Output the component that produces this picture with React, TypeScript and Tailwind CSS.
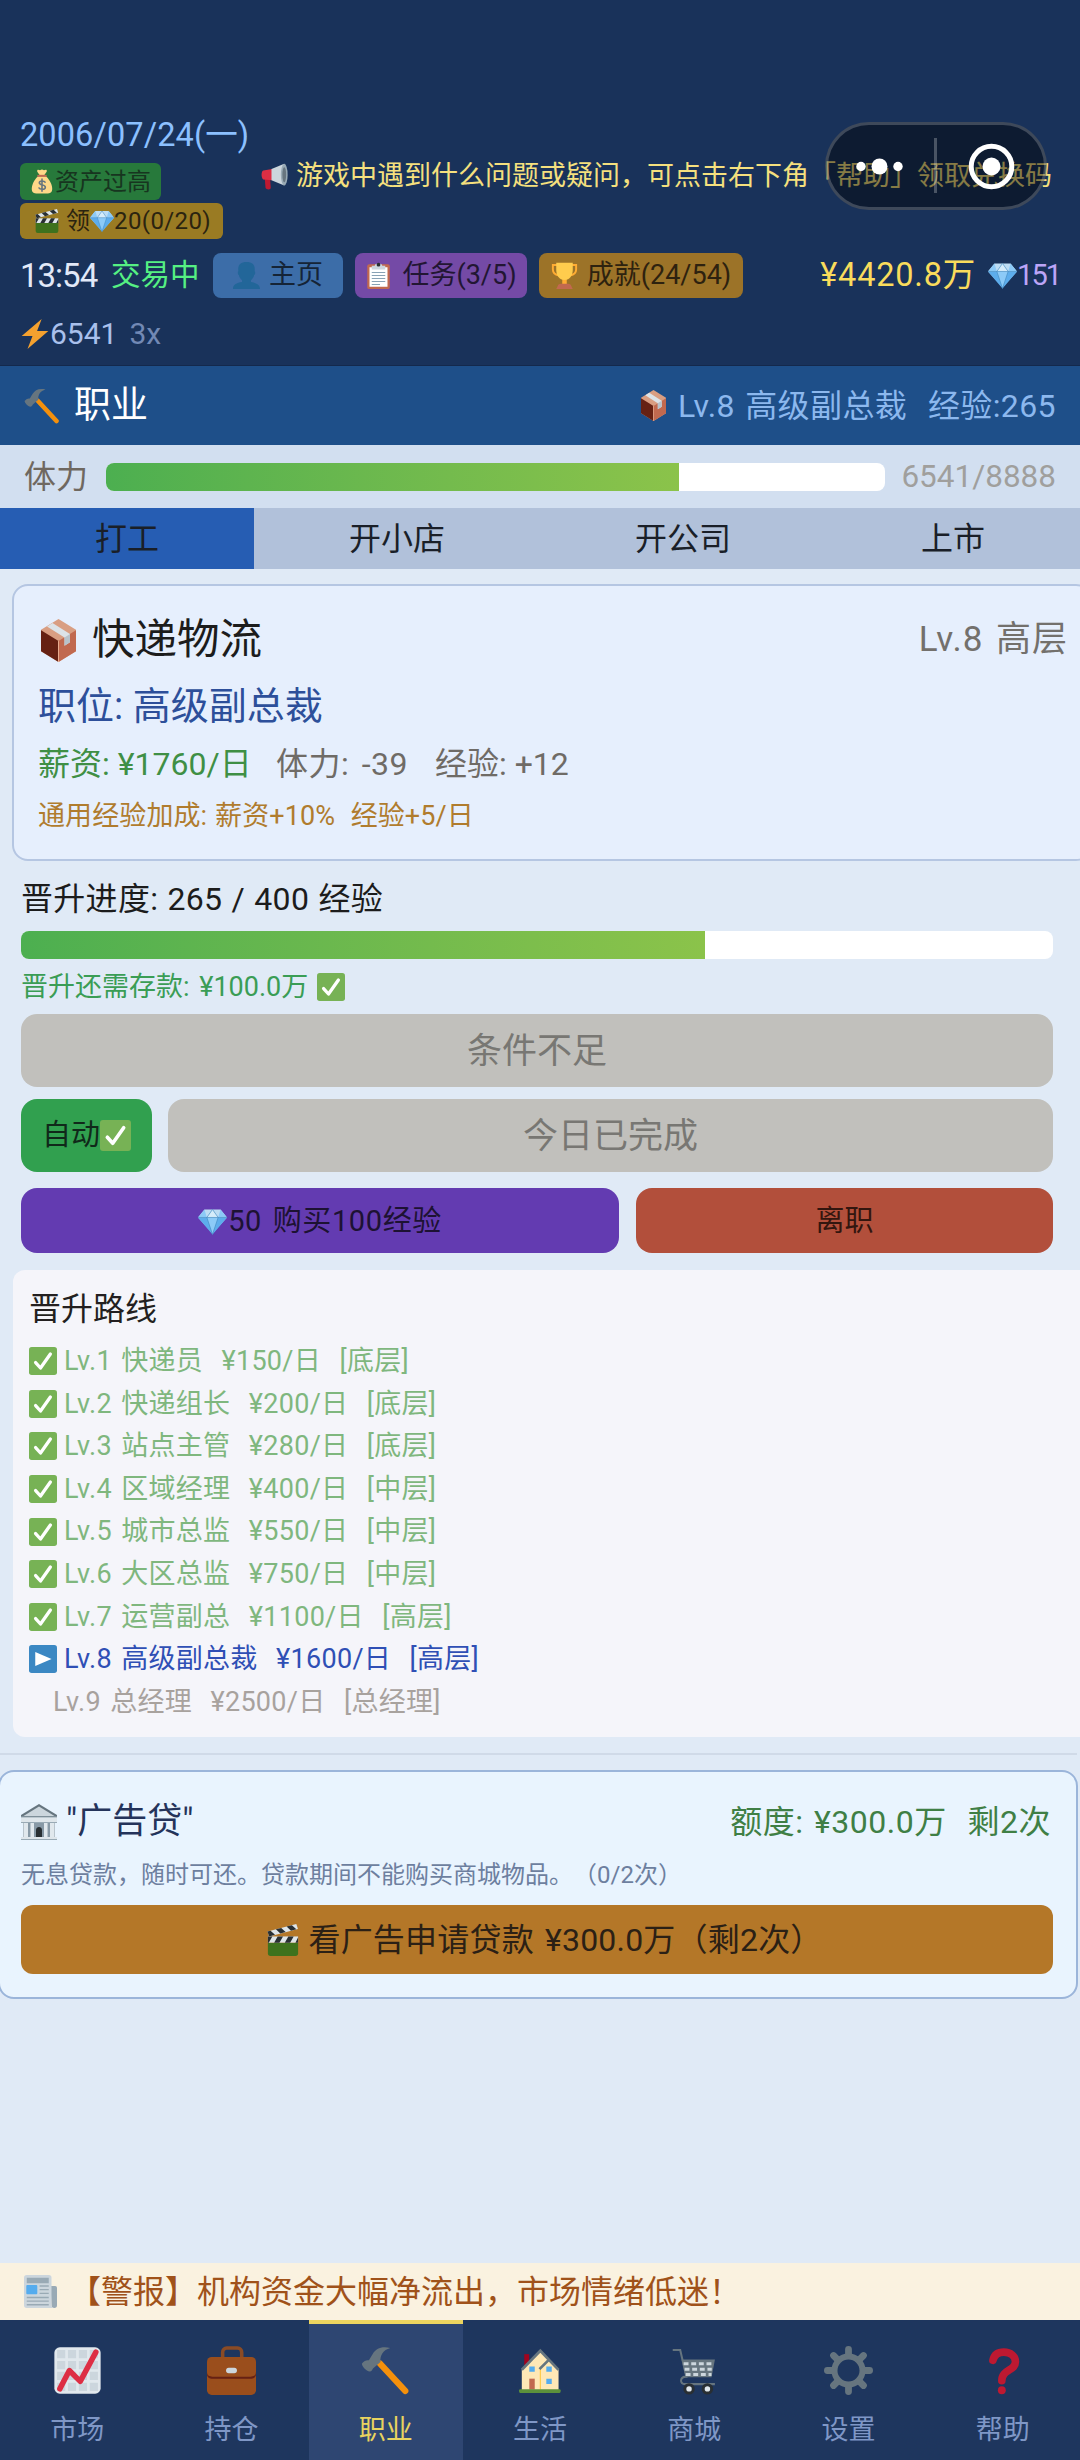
import type { ReactNode } from "react";
import clsx from "clsx";

type IconProps = { className?: string };

function Svg({ className, children }: { className?: string; children: ReactNode }) {
  return (
    <svg viewBox="0 0 36 36" className={clsx("shrink-0", className)} fill="none">
      {children}
    </svg>
  );
}

function MoneyBag({ className }: IconProps) {
  return (
    <Svg className={className}>
      <path fill="#fdd888" d="M31.9 21.8c3 8.7 1.5 14.2-5.4 14.2h-17C2.600 36 1.100 30.500 4.100 21.800 6.300 15.400 12 10 12 10h12s5.700 5.400 7.900 11.800z" />
      <path fill="#fdd888" d="M14.600 8.500C12 4 10 3 11 1c1-1.500 3 0 4 0s2-1 3-1 2 1 3 1 3-1.500 4 0c1 2-1 3-3.600 7.500z" />
      <path fill="#bf6952" d="M11 8h14v3H11z" />
      <path stroke="#67757f" strokeWidth="2.400" strokeLinecap="round" d="M22.500 19c-1-2-8.500-3-8.500 1 0 4.500 9 2 9 6.500 0 4-8 4-9.500 1.200M18 14.500v18" />
    </Svg>
  );
}

function Clapper({ className }: IconProps) {
  return (
    <Svg className={className}>
      <path fill="#3e721d" d="M1 21h34v12a3 3 0 0 1-3 3H4a3 3 0 0 1-3-3z" />
      <path fill="#dfe5e9" d="M1 14h34v7H1z" />
      <path fill="#292f33" d="M1 14h5l-4 7H1zM12 14h6l-4 7H8zM24 14h6l-4 7h-6zM35 15v6h-3z" />
      <path fill="#dfe5e9" d="M.500 8.500 33 0l1.800 5.500L2.500 14z" />
      <path fill="#292f33" d="M.500 8.500 4 7.500l5 4.700-6.500 1.800zM10 6l6-1.600 5 4.700-6 1.600zM22 2.900 28 1.300l5 4.700-6 1.600z" />
    </Svg>
  );
}

function Gem({ className }: IconProps) {
  return (
    <Svg className={className}>
      <path fill="#bdddf4" d="M8 3h20l8 10-18 20L0 13z" />
      <path fill="#5dadec" d="M0 13h36L18 34z" />
      <path fill="#8ccaf7" d="m8 3-8 10h11zM28 3l8 10H25zM11 13h14l-7 21z" />
      <path fill="#d5ecfa" d="m18 3-7 10h14z" />
      <path stroke="#4289c1" strokeWidth=".8" d="M0 13h36M11 13l7 21 7-21-7-10z" />
    </Svg>
  );
}

function Megaphone({ className }: IconProps) {
  return (
    <Svg className={className}>
      <path fill="#be1931" d="M5 20h7l1 13c0 3-6 3-7 0z" />
      <path fill="#dd2e44" d="M3 10c-3 1-3 10 0 12l12 1V8z" />
      <path fill="#ccd6dd" d="M14 8 31 1v29L14 23z" />
      <ellipse cx="31" cy="15.500" rx="4.500" ry="14.500" fill="#99aab5" />
      <ellipse cx="31" cy="15.500" rx="2.500" ry="10" fill="#67757f" />
    </Svg>
  );
}

function Person({ className }: IconProps) {
  return (
    <Svg className={className}>
      <path fill="#226699" d="M24 26.800v-2.600c2.200-1.700 3.800-4.100 4.200-6.800 1.600-.4 1.900-4.400.6-5C30 4 26 0 18 0S6 4 7.200 12.400c-1.300.6-1 4.600.6 5 .4 2.700 2 5.100 4.200 6.800v2.600C5 28 0 30 0 36h36c0-6-5-8-12-9.200z" />
    </Svg>
  );
}

function Clipboard({ className }: IconProps) {
  return (
    <Svg className={className}>
      <rect x="3" y="3" width="30" height="33" rx="2.500" fill="#c1694f" />
      <path fill="#fff" d="M6 7h24v26H6z" />
      <path fill="#ccd6dd" d="M9 5h4c0-4 10-4 10 0h4v5H9z" />
      <circle cx="18" cy="3.500" r="2.500" fill="#292f33" />
      <path stroke="#88a2b5" strokeWidth="1.600" d="M9 14h18M9 18h18M9 22h18M9 26h18M9 30h11" />
    </Svg>
  );
}

function Trophy({ className }: IconProps) {
  return (
    <Svg className={className}>
      <path stroke="#ffac33" strokeWidth="2.600" d="M9 4H2.500v6c0 5 3 7 8 8M27 4h6.500v6c0 5-3 7-8 8" />
      <path fill="#ffac33" d="M15 20h6v10h-6z" />
      <path fill="#ffcc4d" d="M7 1h22v9c0 8-4 14-11 14S7 18 7 10z" />
      <path fill="#c1694f" d="M9 32c0-2 3-3 4-3h10c1 0 4 1 4 3l2 4H7z" />
    </Svg>
  );
}

function Bolt({ className }: IconProps) {
  return (
    <Svg className={className}>
      <path fill="#f4a12f" d="M26 0 2 20.500h13L9 36l25-21.500H20.500z" />
    </Svg>
  );
}

function Hammer({ className }: IconProps) {
  return (
    <Svg className={className}>
      <path stroke="#f4900c" strokeWidth="4.600" strokeLinecap="round" d="M14 13 32.500 33" />
      <path fill="#66757f" d="M21.500 1.500C15 0 11 2 8.500 6L5.800 10.500C4 10 1.500 11.500.600 13c.2 2 3 5.200 5.900 5.800 1.200-.2 1.500-1 2.300-2.300l5.500-4.700c-.5-5 2-8.800 7.200-10.300z" />
    </Svg>
  );
}

function Box({ className }: IconProps) {
  return (
    <svg viewBox="2 0 32 36" preserveAspectRatio="none" className={clsx("shrink-0", className)} fill="none">
      <path fill="#d99e82" d="M18 0 34 9v18L18 36 2 27V9z" />
      <path fill="#662113" d="M2 9.500 18 18.500V36L2 27z" />
      <path fill="#c1694f" d="M18 18.500 34 9.500V27L18 36z" />
      <path stroke="#efb396" strokeWidth=".8" d="M18 18.500V36" />
      <path fill="#dce3e8" d="m7.500 6.200 5-2.900 16 9.200v7l-5 2.900v-7z" />
      <path fill="#b8c3cb" d="M23.500 15.400 28.500 12.500v7l-5 2.900z" />
    </svg>
  );
}

function Check({ className }: IconProps) {
  return (
    <Svg className={className}>
      <rect width="36" height="36" rx="3.500" fill="#77b255" />
      <path stroke="#fff" strokeWidth="4.200" strokeLinecap="round" strokeLinejoin="round" d="m8.500 20 6.300 7L27.500 9" />
    </Svg>
  );
}

function Play({ className }: IconProps) {
  return (
    <Svg className={className}>
      <rect width="36" height="36" rx="3.500" fill="#3b88c3" />
      <path fill="#fff" d="m8 9 21 9L8 27z" />
    </Svg>
  );
}

function Bank({ className }: IconProps) {
  return (
    <Svg className={className}>
      <path fill="#b9c4cc" d="M2 16h32v17H2z" />
      <path fill="#e1e8ed" d="M3 19h4v14H3zM10 19h3v14h-3zM23 19h3v14h-3zM29 19h4v14h-4z" />
      <path fill="#8899a6" d="M7 19h2v14H7zM27 19h2v14h-2zM13 19h10v14H13z" />
      <path fill="#292f33" d="M15 33v-7c0-4 6-4 6 0v7z" />
      <path fill="#dfe6eb" d="M0 33h36v3H0zM0 13h36v5H0z" />
      <path fill="#66757f" d="M18 0 36 11v2H0v-2z" />
      <path fill="#ccd6dd" d="M18 2.500 33.500 12h-31z" />
      <path stroke="#99aab5" d="M0 18.500h36M0 35.500h36M0 13h36" />
    </Svg>
  );
}

function Newspaper({ className }: IconProps) {
  return (
    <Svg className={className}>
      <path fill="#99aab5" d="M29 12h5a2 2 0 0 1 2 2v19a3 3 0 0 1-6 0z" />
      <path fill="#ccd6dd" d="M3 0h24a3 3 0 0 1 3 3v30c0 1.500 1 3 2.500 3H3a3 3 0 0 1-3-3V3a3 3 0 0 1 3-3z" />
      <path fill="#99aab5" d="M3 3h24v6H3z" />
      <rect x="2.500" y="11" width="12" height="10" rx="1" fill="#55acee" />
      <path stroke="#99aab5" strokeWidth="1.500" d="M17 12h10M17 16h10M17 20h10M3 24.500h24M3 28.500h24M3 32.500h24" />
    </Svg>
  );
}

function Chart({ className }: IconProps) {
  return (
    <Svg className={className}>
      <rect x="1" y="1" width="34" height="34" rx="4" fill="#e1e8ed" />
      <path
        fill="#ccd6dd"
        d="M3 3h6v6H3zM11 3h6v6h-6zM19 3h6v6h-6zM27 3h6v6h-6zM3 11h6v6H3zM11 11h6v6h-6zM19 11h6v6h-6zM27 11h6v6h-6zM3 19h6v6H3zM11 19h6v6h-6zM19 19h6v6h-6zM27 19h6v6h-6zM3 27h6v6H3zM11 27h6v6h-6zM19 27h6v6h-6zM27 27h6v6h-6z"
      />
      <path stroke="#dd2e44" strokeWidth="4" strokeLinecap="round" strokeLinejoin="round" d="M5 31.500 12 18l8 8L31.500 4.500" />
    </Svg>
  );
}

function Briefcase({ className }: IconProps) {
  return (
    <Svg className={className}>
      <path stroke="#8a4b25" strokeWidth="2.600" d="M11.500 9V4.500a3 3 0 0 1 3-3h8a3 3 0 0 1 3 3V9" />
      <rect y="8" width="36" height="28" rx="3.500" fill="#9a4e1c" />
      <path fill="#662113" d="M0 19c0 3 2 3.500 4 3.500h28c2 0 4-.5 4-3.500v1.500c0 2.500-2 3.500-4 3.500H4c-2 0-4-1-4-3.500z" />
      <rect x="14" y="16" width="8" height="4" rx="2" fill="#ccd6dd" />
    </Svg>
  );
}

function House({ className }: IconProps) {
  return (
    <Svg className={className}>
      <path fill="#a0041e" d="M6.800 6h3.600v8H6.800z" />
      <path fill="#ffe8b6" d="M5 17 18.600 3.500 32 17v15.500H5z" />
      <path fill="#ffcc4d" d="M18.200 15h.9v17h-.9z" />
      <path stroke="#66757f" strokeWidth="2" d="M5 17.500 18.600 3.500 32 17.500M18 17l7-7" />
      <path fill="#55acee" d="M10.500 15h4v4h-4zM23 15h4v4h-4zM23 24h4v4h-4z" />
      <path fill="#c1694f" d="M10.500 24h4v8h-4z" />
      <rect x="3" y="31.800" width="30.500" height="2.700" rx=".8" fill="#5c913b" />
    </Svg>
  );
}

function Cart({ className }: IconProps) {
  return (
    <Svg className={className}>
      <path stroke="#66757f" strokeWidth="1.500" d="M2 3h5.500l4.500 19.500c-5 0-5 5.500-1 5.500h22" />
      <path fill="#66757f" d="M8.500 10H33l-2.500 13H11.500z" />
      <path stroke="#ccd6dd" strokeWidth="2.200" strokeDasharray="3.600 2" d="M10 13h21.500M10.700 17h20M11.500 21h19" />
      <circle cx="14" cy="31.500" r="4.200" fill="#292f33" />
      <circle cx="27.500" cy="31.500" r="4.200" fill="#292f33" />
      <circle cx="14" cy="31.500" r="2" fill="#e1e8ed" />
      <circle cx="27.500" cy="31.500" r="2" fill="#e1e8ed" />
    </Svg>
  );
}

function Gear({ className }: IconProps) {
  return (
    <Svg className={className}>
      <circle cx="18" cy="18" r="10.300" stroke="#66757f" strokeWidth="4.400" />
      <path
        stroke="#66757f"
        strokeWidth="5"
        strokeLinecap="round"
        d="M18 2.500v4M18 29.500v4M2.500 18h4M29.500 18h4M7 7l3 3M26 26l3 3M29 7l-3 3M10 26l-3 3"
      />
    </Svg>
  );
}

function Question({ className }: IconProps) {
  return (
    <Svg className={className}>
      <path stroke="#be1931" strokeWidth="5.600" strokeLinecap="round" d="M11 10.500C12 6 15 4.500 19 4.500c5 0 8.500 3 8.500 7 0 7-10 5.500-10 14" />
      <circle cx="17.500" cy="32.500" r="2.900" fill="#be1931" />
    </Svg>
  );
}

function TopBar() {
  return (
    <header className="flex h-[366px] flex-col border-b border-[#14294c] bg-[#19325a] px-5 pt-[112px]">
      <div className="flex h-[46px] items-center text-[32.500px] tracking-[0.100px] text-[#8cc0ff]">2006/07/24(一)</div>
      <div className="mt-[5px] flex h-[77px] text-[24px]">
        <div className="flex w-[241px] flex-col items-start gap-[3px]">
          <div className="flex h-[37px] w-[141px] items-center rounded-md bg-[#27793b] pl-[10px] text-[#17351f]">
            <MoneyBag className="h-[25px] w-6" />
            <span className="pl-px">资产过高</span>
          </div>
          <div className="flex h-[36px] w-[203px] items-center rounded-md bg-[#9a7b23] pl-[15px] text-[#2b2410]">
            <Clapper className="mr-[7px] size-6" />
            领
            <Gem className="size-6" />
            <span className="tracking-[0.400px]">20(0/20)</span>
          </div>
        </div>
        <div className="flex h-[27px] items-center text-[27px] whitespace-nowrap text-[#f5e07e]">
          <Megaphone className="mr-[8px] size-[27px]" />
          游戏中遇到什么问题或疑问，可点击右下角「帮助」领取兑换码
        </div>
      </div>
      <div className="mt-[13px] flex h-[45px] items-center whitespace-pre">
        <span className="w-[91px] text-[33px] tracking-[-1px] text-[#e2e9f8]">13:54</span>
        <span className="w-[102px] text-[29.500px] text-[#55f083]">交易中</span>
        <div className="flex h-full w-[130px] items-center justify-center gap-[9px] rounded-lg bg-[#3c6da8] text-[27px] text-[#152436]">
          <Person className="size-[27px]" />
          主页
        </div>
        <div className="ml-3 flex h-full w-[172px] items-center justify-center gap-[10px] rounded-lg bg-[#744aa6] text-[27px] text-[#221633]">
          <Clipboard className="size-[27px]" />
          任务(3/5)
        </div>
        <div className="ml-[12px] flex h-full w-[204px] items-center justify-center gap-[9px] rounded-lg bg-[#9c7328] text-[27px] text-[#2e220f]">
          <Trophy className="size-[27px]" />
          成就(24/54)
        </div>
        <span className="ml-auto text-[32.500px] tracking-[0.800px] text-[#f9dc5c]">¥4420.8万</span>
        <Gem className="ml-[12px] size-[29px]" />
        <span className="text-[29px] tracking-[-2px] text-[#bca5f7]">151</span>
      </div>
      <div className="mt-[13px] flex h-[45px] items-center text-[30px]">
        <Bolt className="size-[30px]" />
        <span className="text-[#a9c0ec]">6541</span>
        <span className="ml-[12px] text-[#7289b5]">3x</span>
      </div>
    </header>
  );
}

// host app menu that floats over the page
function Capsule() {
  return (
    <div className="absolute top-[122px] left-[825px] h-[88px] w-[222px] rounded-full border-[3px] border-white/20 bg-black/45">
      <svg viewBox="0 0 216 82" className="h-full w-full" fill="#fff">
        <circle cx="33" cy="41.500" r="4.700" />
        <circle cx="51.500" cy="41.500" r="8" />
        <circle cx="70" cy="41.500" r="4.700" />
        <path d="M106 13h3v55h-3z" opacity=".25" />
        <circle cx="163.500" cy="41.500" r="20.300" fill="none" stroke="#fff" strokeWidth="5" />
        <circle cx="163.500" cy="41.500" r="9" />
      </svg>
    </div>
  );
}

function Meter({ value, className }: { value: number; className?: string }) {
  return (
    <div className={clsx("h-7 overflow-hidden rounded-lg bg-white", className)}>
      <div className="h-full bg-linear-to-r from-[#4caf50] to-[#8bc34a]" style={{ width: `${value * 100}%` }} />
    </div>
  );
}

const tabs = ["打工", "开小店", "开公司", "上市"];

const route = [
  "Lv.1 快递员  ¥150/日  [底层]",
  "Lv.2 快递组长  ¥200/日  [底层]",
  "Lv.3 站点主管  ¥280/日  [底层]",
  "Lv.4 区域经理  ¥400/日  [中层]",
  "Lv.5 城市总监  ¥550/日  [中层]",
  "Lv.6 大区总监  ¥750/日  [中层]",
  "Lv.7 运营副总  ¥1100/日  [高层]",
  "Lv.8 高级副总裁  ¥1600/日  [高层]",
  "Lv.9 总经理  ¥2500/日  [总经理]",
];
const currentLevel = 7;

const nav = [
  { label: "市场", Icon: Chart },
  { label: "持仓", Icon: Briefcase },
  { label: "职业", Icon: Hammer },
  { label: "生活", Icon: House },
  { label: "商城", Icon: Cart },
  { label: "设置", Icon: Gear },
  { label: "帮助", Icon: Question },
];

function JobCard() {
  return (
    <section className="mt-[15px] ml-3 h-[277px] w-[1080px] rounded-2xl border-2 border-[#b5c6e2] bg-[#e6effd] pl-6 whitespace-pre">
      <div className="mt-[28px] flex h-[52px] w-[1030px] items-center">
        <Box className="ml-[3px] h-[43px] w-[35px]" />
        <span className="ml-[16px] text-[42.500px] text-[#1c1c1c]">快递物流</span>
        <span className="ml-auto text-[35px] tracking-[1px] text-[#73706c] [word-spacing:3px]">Lv.8 高层</span>
      </div>
      <p className="mt-[17px] h-[46px] text-[38px] leading-[46px] text-[#2d4f9a]">职位: 高级副总裁</p>
      <p className="mt-[16px] flex h-[38px] items-center text-[32px] text-[#6f6b66]">
        <span className="w-[238px] text-[#3f8f45]">薪资: ¥1760/日</span>
        <span className="w-[159px] tracking-[0.500px] [word-spacing:4px]">体力: -39</span>
        <span>经验: +12</span>
      </p>
      <p className="mt-[16px] h-[34px] text-[27px] leading-[34px] tracking-[0.100px] text-[#b07c2e] [word-spacing:1px]">
        通用经验加成: 薪资+10%  经验+5/日
      </p>
    </section>
  );
}

function Promotion() {
  return (
    <section className="mt-[17px] pr-[27px] pl-[21px] whitespace-pre">
      <p className="h-[42px] text-[32px] leading-[42px] tracking-[0.300px] text-[#1c1c1c] [word-spacing:1px]">晋升进度: 265 / 400 经验</p>
      <Meter value={265 / 400} className="mt-[11px]" />
      <p className="mt-[9px] flex h-[38px] items-center text-[27px] text-[#3a9d55] [word-spacing:3px]">
        晋升还需存款: ¥100.0万
        <Check className="ml-[9px] size-7" />
      </p>
      <button className="mt-[8px] h-[73px] w-full rounded-2xl bg-[#c1c0bc] pt-[3px] text-[35px] text-[#787773]">条件不足</button>
      <div className="mt-3 flex h-[73px] gap-4">
        <button className="flex w-[131px] items-center justify-center rounded-2xl bg-[#31a04f] text-[29px] text-[#10291a]">
          自动
          <Check className="size-[31px]" />
        </button>
        <button className="flex-1 rounded-2xl bg-[#c1c0bc] pt-[3px] text-[35px] text-[#787773]">今日已完成</button>
      </div>
      <div className="mt-4 flex h-[65px] gap-[17px] text-[29px]">
        <button className="flex w-[598px] items-center justify-center rounded-2xl bg-[#633bb1] pt-0.5 tracking-[0.600px] text-[#1d1233] [word-spacing:3px]">
          <Gem className="mr-px size-[29px]" />
          50 购买100经验
        </button>
        <button className="flex-1 rounded-2xl bg-[#b24f3b] pt-0.5 text-[#33160f]">离职</button>
      </div>
    </section>
  );
}

function Route() {
  return (
    <section className="mt-[17px] ml-[13px] h-[467px] w-[1080px] rounded-xl bg-[#f5f5fa] pt-[18px] pl-4 whitespace-pre">
      <h3 className="h-[42px] text-[32px] leading-[42px] text-[#231f20]">晋升路线</h3>
      <ul className="mt-[10px] text-[27px] tracking-[0.300px] [word-spacing:2.200px]">
        {route.map((line, i) => (
          <li
            key={line}
            className={clsx(
              "flex h-[42.600px] items-center",
              i < currentLevel && "text-[#7fb77e]",
              i === currentLevel && "text-[#2f4fb5]",
              i > currentLevel && "pl-6 text-[#a8a29e]"
            )}
          >
            {i < currentLevel && <Check className="mr-[7px] size-7" />}
            {i === currentLevel && <Play className="mr-[7px] size-7" />}
            {line}
          </li>
        ))}
      </ul>
    </section>
  );
}

function LoanCard() {
  return (
    <section className="mt-[15px] -ml-[2px] h-[229px] w-[1080px] rounded-2xl border-2 border-[#9bb5da] bg-[#e9f4fe] pr-[23px] pl-[21px] whitespace-pre">
      <div className="mt-[27px] flex h-[46px] items-center pr-[2px]">
        <Bank className="size-[36px]" />
        <span className="ml-[9px] text-[35px] text-[#24335a]">"广告贷"</span>
        <span className="ml-auto text-[32px] tracking-[0.500px] text-[#3f7f45] [word-spacing:2px]">额度: ¥300.0万  剩2次</span>
      </div>
      <p className="mt-[13px] h-[34px] text-[24px] leading-[34px] text-[#6d7f9f]">无息贷款，随时可还。贷款期间不能购买商城物品。（0/2次）</p>
      <button className="mt-[13px] flex h-[69px] w-full items-center justify-center rounded-xl bg-[#b47728] text-[32px] tracking-[0.200px] text-[#2b2015] [word-spacing:3px]">
        <Clapper className="mr-[9px] ml-4 size-8" />
        看广告申请贷款 ¥300.0万（剩2次）
      </button>
    </section>
  );
}

export default function App() {
  return (
    <div className="relative flex h-[2460px] w-[1080px] flex-col overflow-hidden bg-[#e0eaf6] font-[Roboto,'Noto_Sans_CJK_SC',sans-serif] [text-spacing-trim:space-all]">
      <TopBar />
      <Capsule />
      <div className="flex h-[79px] items-center bg-[#1e4f89] pr-6 pl-6 whitespace-pre">
        <Hammer className="size-9" />
        <span className="ml-[14px] text-[37px] text-white">职业</span>
        <Box className="ml-auto h-[31px] w-[25px]" />
        <span className="ml-[12px] text-[32px] tracking-[0.400px] text-[#8cb8ee] [word-spacing:2px]">Lv.8 高级副总裁  经验:265</span>
      </div>
      <div className="flex h-[63px] items-center bg-[#d2dff0] px-6 text-[32px]">
        <span className="w-[82px] text-[#6f6860]">体力</span>
        <Meter value={6541 / 8888} className="w-[779px]" />
        <span className="ml-auto text-[31.500px] text-[#a09f9d]">6541/8888</span>
      </div>
      <div className="flex h-[61px] text-[32px] text-[#1a1f28]">
        {tabs.map((tab, i) => (
          <button key={tab} className={clsx("flex-auto", i === 0 ? "bg-[#265db3]" : "bg-[#b1c1da]")}>
            {tab}
          </button>
        ))}
      </div>
      <main className="flex-1">
        <JobCard />
        <Promotion />
        <Route />
        <div className="mt-4 mr-[3px] h-0.5 bg-[#d0dae8]" />
        <LoanCard />
      </main>
      <div className="flex h-[57px] items-center bg-[#faf2e0] pl-6 text-[32px] text-[#a0521a]">
        <Newspaper className="mr-[12px] size-[33px]" />
        【警报】机构资金大幅净流出，市场情绪低迷！
      </div>
      <nav className="flex h-[140px] bg-[#1e365e]">
        {nav.map(({ label, Icon }, i) => (
          <div
            key={label}
            className={clsx(
              "flex flex-1 flex-col items-center border-t-4 pt-[22px] text-[27px]",
              i === 2 ? "border-[#ecd45f] bg-[#2e4672] text-[#e8d35f]" : "border-transparent text-[#7f97c6]"
            )}
          >
            <Icon className="size-[49px]" />
            <span className="mt-[15px]">{label}</span>
          </div>
        ))}
      </nav>
    </div>
  );
}
